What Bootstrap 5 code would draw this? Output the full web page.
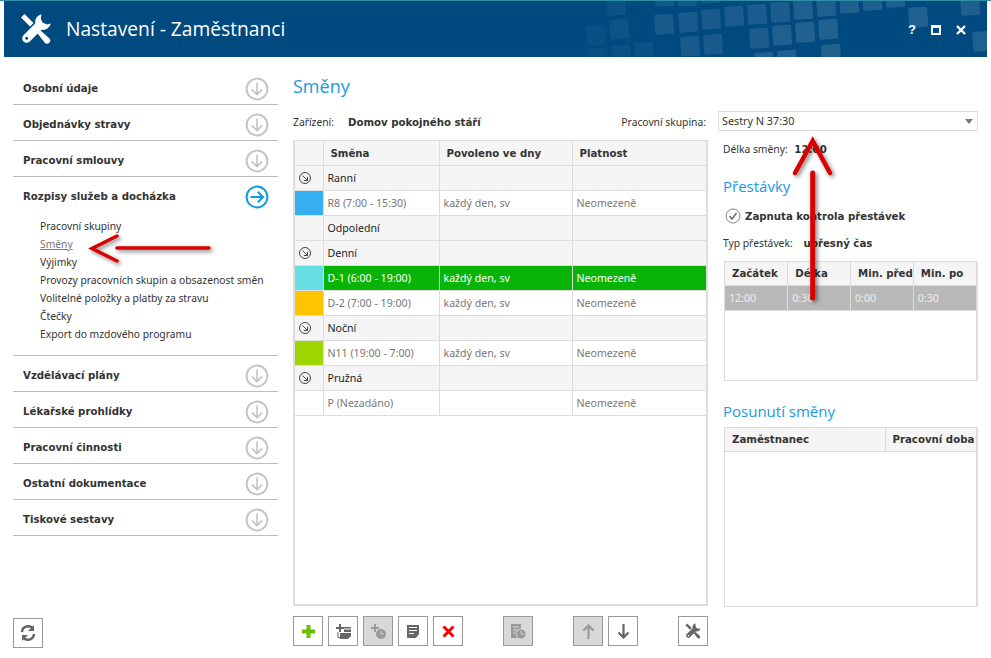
<!DOCTYPE html>
<html>
  <head>
    <title>Nastavení - Zaměstnanci</title>
    <meta charset="UTF-8" />
    <link href="https://cdn.jsdelivr.net/npm/bootstrap@5.3.3/dist/css/bootstrap.min.css" rel="stylesheet">
    <style>
      html, body { height: 100%; }
      body {
        font-family: "Noto Sans", "Liberation Sans", sans-serif;
        font-size: 10.300px;
        color: #333;
        background: #fff;
        overflow: hidden;
        position: relative;
      }
      b, th { font-family: "DejaVu Sans", sans-serif; font-size: 10.200px; }
      .topline { height: 1px; background: #2f8ea8; }
      .app-head { height: 56px; margin: 0 4px; background: #004a80; color: #fff; position: relative; overflow: hidden; }
      .app-head .pattern { position: absolute; left: 0; top: 0; }
      .app-logo { margin-left: 16px; margin-right: 14px; position: relative; color: #fff; }
      .app-title { font-family: "Open Sans", sans-serif; font-size: 19.200px; position: relative; }
      .win-btns { position: absolute; right: 21px; top: 23px; gap: 15px; }
      .win-help { font-family: "Liberation Sans", sans-serif; font-size: 13px; line-height: 12px; width: 8px; }

      .side { width: 265px; margin-left: 13px; margin-top: 12px; flex: none; }
      .side-row { height: 36px; border-bottom: 1px solid #bbb; padding: 4px 9px 0 10px; }
      .side-row b { color: #333; }
      .side-sub { height: 144px; padding: 5px 0 0 27px; border-bottom: 1px solid #bbb; margin-top: -1px; }
      .side-sub a { display: block; height: 18px; line-height: 18px; color: #333; text-decoration: none; }
      .side-sub a.cur { color: #777; text-decoration: underline; }
      .side-open { border-bottom: 0; }
      .refresh { position: absolute; left: 13px; top: 618px; }

      .sq-btn { width: 30px; height: 30px; flex: none; border: 1px solid #999; background: #fff; padding: 0; border-radius: 0; color: #666; display: flex; align-items: center; justify-content: center; }
      .sq-btn.off { background: #d8d8d8; color: #999; }

      .main { width: 415px; margin-left: 15px; flex: none; }
      .blue-title { color: #1a9ae0; font-size: 18px; font-family: "Open Sans", sans-serif; line-height: 24px; }
      .small-title { font-size: 15px; }
      .info-line { height: 20px; }
      .info-label { display: inline-block; width: 55px; }
      .group-label { margin-right: 2px; }

      .grid-box { border: 2px solid #ddd; border-top-width: 1px; background: #fff; }
      .grid-box.thin { border-width: 1px 2px 1px 1px; margin-left: 6px; }
      .grid-tbl { width: 100%; table-layout: fixed; margin: 0; border-collapse: collapse; }
      .grid-tbl th, .grid-tbl td { border: 1px solid #ddd; height: 25px; padding: 2px 0 0 4px; font-size: 10.600px; font-weight: normal; vertical-align: middle; color: #777; overflow: hidden; white-space: nowrap; }
      .grid-tbl tr > :first-child { border-left: 0; }
      .grid-tbl tr > :last-child { border-right: 0; }
      .grid-tbl tr:first-child > * { border-top: 0; }
      .grid-tbl th { height: 24px; background: #f5f5f5; font-size: 10.200px; font-weight: bold; color: #333; padding: 1px 0 0 7px; }
      .grid-tbl tr.grp td { background: #f5f5f5; color: #222; }
      .grid-tbl tr.sel td { background: #08b408; color: #fff; }
      .grid-tbl tr.gry td { background: #b8b8b8; color: #eee; }
      .grid-tbl td.chip { padding: 0 0 0 3px; }
      .grid-tbl td.chip svg { display: block; }
      .c-blue { background: #36aff0 !important; }
      .c-cyan { background: #66dfe3 !important; }
      .c-yellow { background: #ffc400 !important; }
      .c-lime { background: #a0d600 !important; }

      .tools { height: 30px; margin-top: 10px; }
      .tools .sq-btn { margin-right: 5px; }
      .tools .gap-one { margin-left: 35px; }

      .right { width: 260px; margin-left: 10px; flex: none; padding-top: 54px; }
      .pick { height: 20px; line-height: 18px; border: 1px solid #ddd; padding-left: 3px; font-size: 10.800px; color: #333; position: relative; }
      .pick::after { content: ""; position: absolute; right: 4px; top: 7px; border: 4px solid transparent; border-top: 5px solid #777; border-bottom: 0; }
      .right-line { padding-left: 5px; }
      .overlay-arrows { position: absolute; left: 0; top: 0; pointer-events: none; }
    </style>
  </head>
  <body>
    <svg width="0" height="0" class="position-absolute">
      <symbol id="tools-ico" viewBox="0 0 32 32">
        <path fill="currentColor" fill-rule="evenodd" d="M21.500 1.200A8 8 0 0 0 15.200 10.500L3.500 22.200A4.200 4.200 0 0 0 9.800 28.500L21.500 16.800A8 8 0 0 0 30.800 10.500L27 11.500L22.500 9.500L20.800 5.500ZM6.700 23.800a1.500 1.500 0 1 1 0 3a1.500 1.500 0 1 1 0-3Z"/>
        <path fill="currentColor" d="M1 4.500L4.500 1L13.500 10L10 13.500ZM17.500 20.500L20.500 17.500L29.500 25.500A3.200 3.200 0 0 1 25 30Z"/>
      </symbol>
      <symbol id="grp-ico" viewBox="0 0 14 14">
        <circle cx="7" cy="7" r="5.500" fill="none" stroke="#444"/>
        <path d="M4.500 4.500L9.300 9.300M9.500 5.800V9.500H5.800" fill="none" stroke="#444"/>
      </symbol>
    </svg>

    <div class="topline"></div>
    <div class="app-head d-flex align-items-center">
      <svg class="pattern" width="983" height="56"><g fill="#fff" id="pat"></g></svg>
      <svg class="app-logo" width="32" height="32"><use href="#tools-ico"/></svg>
      <span class="app-title">Nastavení - Zaměstnanci</span>
      <div class="win-btns d-flex align-items-center">
        <b class="win-help text-white">?</b>
        <svg width="10" height="10"><rect width="10" height="10" fill="#fff"/><rect x="2" y="3" width="6" height="5" fill="#004a80"/></svg>
        <svg width="10" height="10"><path d="M1 1l8 8M9 1l-8 8" stroke="#fff" stroke-width="2.400"/></svg>
      </div>
    </div>

    <div class="d-flex">
      <div class="side">
        <div id="sideTop"></div>
        <div class="side-sub">
          <a href="#">Pracovní skupiny</a>
          <a href="#" class="cur">Směny</a>
          <a href="#">Výjimky</a>
          <a href="#">Provozy pracovních skupin a obsazenost směn</a>
          <a href="#">Volitelné položky a platby za stravu</a>
          <a href="#">Čtečky</a>
          <a href="#">Export do mzdového programu</a>
        </div>
        <div id="sideBottom"></div>
      </div>

      <div class="main">
        <div class="blue-title" style="margin-top:17px">Směny</div>
        <div class="info-line d-flex align-items-center justify-content-between" style="margin-top:15px">
          <span><span class="info-label">Zařízení:</span><b>Domov pokojného stáří</b></span>
          <span class="group-label">Pracovní skupina:</span>
        </div>
        <div class="grid-box" style="height:466px;margin-top:7px">
          <table class="grid-tbl">
            <colgroup><col style="width:28px"><col style="width:116px"><col style="width:133px"><col></colgroup>
            <tr><th></th><th>Směna</th><th>Povoleno ve dny</th><th>Platnost</th></tr>
            <tr class="grp"><td class="chip"><svg width="14" height="14"><use href="#grp-ico"/></svg></td><td>Ranní</td><td></td><td></td></tr>
            <tr><td class="chip c-blue"></td><td>R8 (7:00 - 15:30)</td><td>každý den, sv</td><td>Neomezeně</td></tr>
            <tr class="grp"><td class="chip"></td><td>Odpolední</td><td></td><td></td></tr>
            <tr class="grp"><td class="chip"><svg width="14" height="14"><use href="#grp-ico"/></svg></td><td>Denní</td><td></td><td></td></tr>
            <tr class="sel"><td class="chip c-cyan"></td><td>D-1 (6:00 - 19:00)</td><td>každý den, sv</td><td>Neomezeně</td></tr>
            <tr><td class="chip c-yellow"></td><td>D-2 (7:00 - 19:00)</td><td>každý den, sv</td><td>Neomezeně</td></tr>
            <tr class="grp"><td class="chip"><svg width="14" height="14"><use href="#grp-ico"/></svg></td><td>Noční</td><td></td><td></td></tr>
            <tr><td class="chip c-lime"></td><td>N11 (19:00 - 7:00)</td><td>každý den, sv</td><td>Neomezeně</td></tr>
            <tr class="grp"><td class="chip"><svg width="14" height="14"><use href="#grp-ico"/></svg></td><td>Pružná</td><td></td><td></td></tr>
            <tr><td class="chip"></td><td>P (Nezadáno)</td><td></td><td>Neomezeně</td></tr>
          </table>
        </div>
        <div class="tools d-flex">
          <button class="sq-btn"><svg width="13" height="13"><path d="M4.500 0h4v4.500H13v4H8.500V13h-4V8.500H0v-4h4.500z" fill="#6cc000"/></svg></button>
          <button class="sq-btn"><svg width="15" height="15" fill="#666"><path d="M3 0h2v3h3v2H5v3H3V5H0V3h3z"/><path d="M8 3h7v1.500H8zM8 5.500h7V8H8z"/><path d="M4 9h11v3l-3 3H4z"/><path d="M1.500 8h1v5h1.500v1H1.500z"/></svg></button>
          <button class="sq-btn off"><svg width="15" height="15"><path d="M3 0h2v3h3v2H5v3H3V5H0V3h3z" fill="#999"/><circle cx="10" cy="10" r="5" fill="#999"/><path d="M10 7v3h3" stroke="#d8d8d8" fill="none"/></svg></button>
          <button class="sq-btn"><svg width="13" height="13"><path d="M0 0h12v9l-3 4H0z" fill="#666"/><path d="M2 2.500h8M2 5.500h8M2 8.500h5" stroke="#fff"/></svg></button>
          <button class="sq-btn"><svg width="13" height="13"><path d="M1.500 1.500l10 10M11.500 1.500l-10 10" stroke="#f00" stroke-width="3"/></svg></button>
          <button class="sq-btn off gap-one"><svg width="15" height="15"><path d="M0 0h10v14H0z" fill="#999"/><path d="M2 3h6M2 6h6M2 9h2" stroke="#d8d8d8"/><circle cx="10" cy="10" r="5" fill="#999" stroke="#d8d8d8"/><path d="M10 7v3h3" stroke="#d8d8d8" fill="none"/></svg></button>
          <button class="sq-btn off gap-one"><svg width="13" height="15"><path d="M1.500 6.500l5-5 5 5M6.500 2v13" stroke="#999" stroke-width="2.200" fill="none"/></svg></button>
          <button class="sq-btn"><svg width="13" height="15"><path d="M1.500 8.500l5 5 5-5M6.500 13V0" stroke="#666" stroke-width="2.200" fill="none"/></svg></button>
          <button class="sq-btn gap-one"><svg width="16" height="16"><use href="#tools-ico"/></svg></button>
        </div>
      </div>

      <div class="right">
        <div class="pick">Sestry N 37:30</div>
        <div class="right-line" style="margin-top:11px">Délka směny: <b class="ms-1">12:00</b></div>
        <div class="blue-title small-title right-line" style="margin-top:17px">Přestávky</div>
        <div class="right-line d-flex align-items-center" style="margin-top:10px;margin-left:2px">
          <svg width="16" height="16" class="me-1"><circle cx="8" cy="8" r="7" fill="none" stroke="#888"/><path d="M4.500 8l2.500 3 4.500-6" fill="none" stroke="#666" stroke-width="1.400"/></svg>
          <b>Zapnuta kontrola přestávek</b>
        </div>
        <div class="right-line" style="margin-top:12px">Typ přestávek: <b class="ms-2">upřesný čas</b></div>
        <div class="grid-box thin" style="height:120px;margin-top:9px">
          <table class="grid-tbl">
            <tr><th>Začátek</th><th>Délka</th><th>Min. před</th><th>Min. po</th></tr>
            <tr class="gry"><td>12:00</td><td>0:30</td><td>0:00</td><td>0:30</td></tr>
          </table>
        </div>
        <div class="blue-title small-title right-line" style="margin-top:18px">Posunutí směny</div>
        <div class="grid-box thin" style="height:180px;margin-top:4px">
          <table class="grid-tbl">
            <colgroup><col style="width:160px"><col></colgroup>
            <tr><th>Zaměstnanec</th><th>Pracovní doba</th></tr>
          </table>
        </div>
      </div>
    </div>

    <button class="sq-btn refresh"><svg width="18" height="18"><path d="M3 8a6 6 0 0 1 11-3M15 10a6 6 0 0 1-11 3" fill="none" stroke="#666" stroke-width="2.500"/><path d="M15 1v6h-6zM3 17v-6h6z" fill="#666"/></svg></button>

    <svg class="overlay-arrows" width="991" height="658">
      <defs><filter id="sh" x="-30%" y="-30%" width="160%" height="160%"><feDropShadow dx="2" dy="2" stdDeviation="2" flood-color="#000" flood-opacity="0.5"/></filter></defs>
      <g fill="none" stroke="#d80000" stroke-linecap="round" stroke-linejoin="miter" filter="url(#sh)">
        <path d="M117 236L92 248.500L117 261" stroke-width="3.500"/>
        <path d="M117 248H209" stroke-width="3.500"/>
        <path d="M795 173L812.700 141L830 173" stroke-width="4.500"/>
        <path d="M812.700 173V298" stroke-width="5"/>
      </g>
    </svg>
    <script>
      // accordion rows of the sidebar
      function row(name, open) {
        var c = open ? "#0d9be6" : "#c4c4c4";
        var icon = open
          ? '<path d="M7 15h15M16 8.500l6.500 6.500-6.500 6.500" fill="none" stroke="' + c + '" stroke-width="2.500"/>'
          : '<path d="M15 7v15M8.500 15.500l6.500 6.500 6.500-6.500" fill="none" stroke="' + c + '" stroke-width="2"/>';
        return '<div class="side-row d-flex align-items-center justify-content-between' + (open ? ' side-open' : '') + '"><b>' + name +
          '</b><svg width="24" height="24" viewBox="0 0 30 30"><circle cx="15" cy="15" r="13" fill="none" stroke="' + c + '" stroke-width="2.500"/>' + icon + '</svg></div>';
      }
      document.getElementById("sideTop").innerHTML =
        ["Osobní údaje", "Objednávky stravy", "Pracovní smlouvy"].map(function(n) { return row(n); }).join("") + row("Rozpisy služeb a docházka", true);
      document.getElementById("sideBottom").innerHTML =
        ["Vzdělávací plány", "Lékařské prohlídky", "Pracovní činnosti", "Ostatní dokumentace", "Tiskové sestavy"].map(function(n) { return row(n); }).join("");

      // background squares in the header: x, y (page px) and strength
      var squares = [
        [586,26,.03],[609,20,.05],[606,-4,.05],[588,49,.03],[611,46,.04],[634,43,.04],
        [654,-13,.08],[677,-13,.08],[700,-16,.08],
        [654,15,.09],[678,13,.09],[701,10,.09],[724,7,.1],[747,5,.1],[770,3,.11],[793,0,.12],[816,-3,.12],[839,-6,.12],[862,-9,.12],[885,-12,.12],
        [680,37,.09],[703,35,.09],[749,29,.11],[772,26,.12],[795,23,.13],[818,20,.13],
        [754,53,.12],[777,51,.13],[821,45,.13],[908,8,.13],[960,-4,.12],[972,32,.12]
      ];
      document.getElementById("pat").innerHTML = squares.map(function(s) {
        var x = s[0] - 4, y = s[1] - 1;
        return '<rect x="' + x + '" y="' + y + '" width="19" height="20" rx="2" fill-opacity="' + s[2] + '" transform="rotate(-4 ' + x + ' ' + y + ')"/>';
      }).join("");
    </script>
  </body>
</html>
